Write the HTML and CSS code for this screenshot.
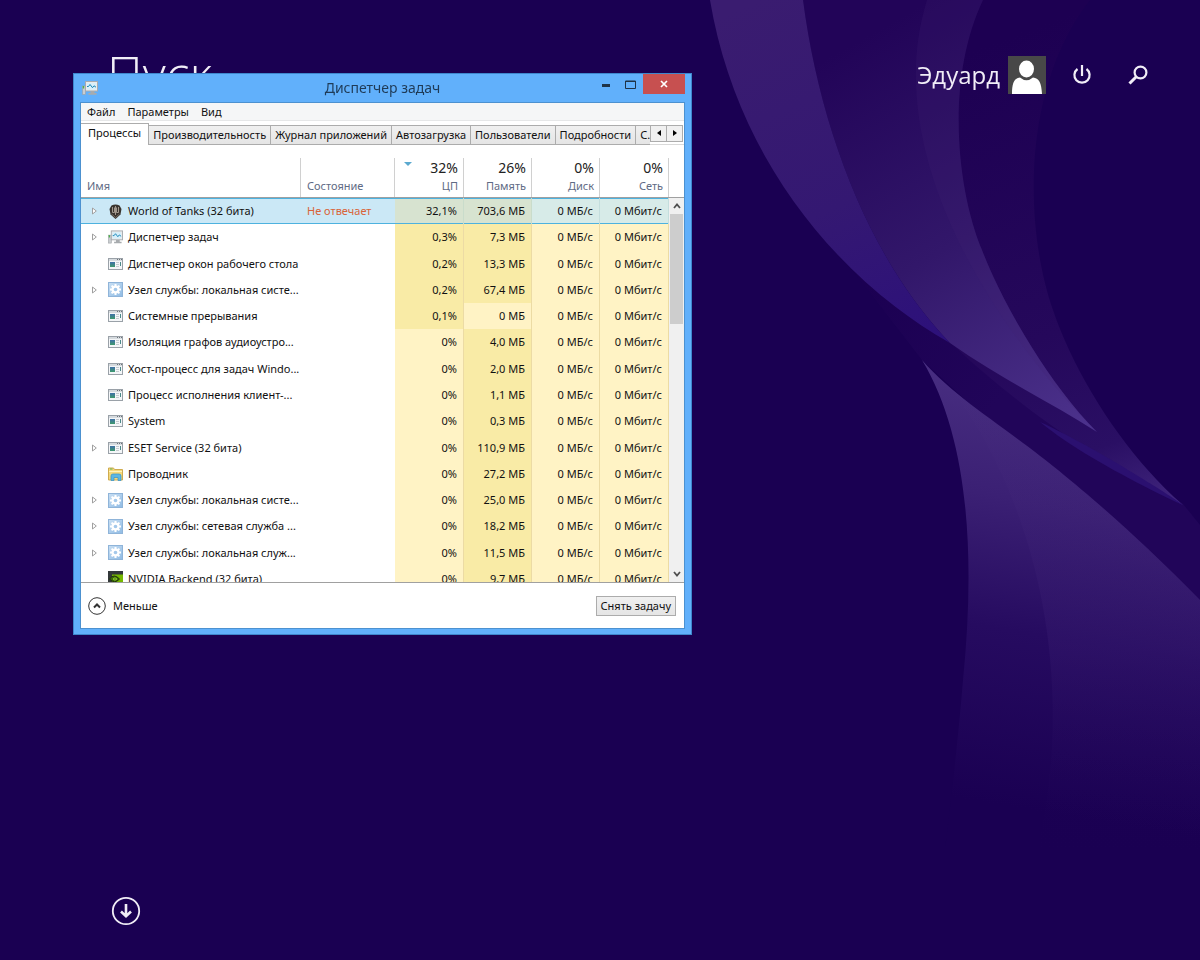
FILE: index.html
```html
<!DOCTYPE html>
<html lang="ru">
<head>
    <meta charset="UTF-8">
    <meta name="viewport" content="width=device-width, initial-scale=1.0">
    <title>Диспетчер задач</title>
    <link rel="stylesheet" href="styles.css">
</head>
<body>
    <!-- icons shared by the rows -->
    <svg class="defs" width="0" height="0">
        <defs>
            <linearGradient id="gearbg" x1="0" y1="0" x2="1" y2="1">
                <stop offset="0" stop-color="#c9dff3"/>
                <stop offset="1" stop-color="#8fbbe4"/>
            </linearGradient>
            <linearGradient id="doc" x1="0" y1="0" x2="0" y2="1">
                <stop offset="0" stop-color="#3f6fa8"/>
                <stop offset="1" stop-color="#3e9a6c"/>
            </linearGradient>
        </defs>
        <symbol id="i-app" viewBox="0 0 15 12">
            <rect x="0.5" y="0.5" width="14" height="11" fill="#f4f6f8" stroke="#9aa1a8"/>
            <rect x="1" y="1" width="13" height="2" fill="#d5dade"/>
            <path d="M9 1.5h1M11 1.5h1M13 1.5h1" stroke="#6d7379"/>
            <rect x="2" y="4" width="5" height="5" fill="url(#doc)"/>
            <path d="M8 4.5h3M8 6.500h3M8 8.500h3" stroke="#c4cbd0"/>
            <rect x="12" y="4" width="1" height="4" fill="#4c8a8a"/>
        </symbol>
        <symbol id="i-gear" viewBox="0 0 15 15">
            <rect x="0.5" y="0.5" width="14" height="14" fill="url(#gearbg)" stroke="#8fb4d9"/>
            <g stroke="#fff" stroke-width="2">
                <path d="M7.5 2v11M2 7.5h11M3.6 3.6l7.8 7.8M11.4 3.6l-7.8 7.8"/>
            </g>
            <circle cx="7.5" cy="7.5" r="4" fill="#fff"/>
            <circle cx="7.5" cy="7.5" r="1.8" fill="#a3c8ea"/>
        </symbol>
        <symbol id="i-task" viewBox="0 0 16 14">
            <rect x="0.5" y="5" width="3" height="8.5" fill="#c9cdd0" stroke="#9a9fa3" stroke-width="0.6"/>
            <rect x="0.8" y="5" width="1.4" height="2.5" fill="#4fb04f"/>
            <path d="M8.500 10h4v2h2v1.700H6.500V12h2z" fill="#a7abae"/>
            <rect x="3.5" y="0.5" width="12" height="9.5" fill="#e9ebec" stroke="#a7abae"/>
            <rect x="5" y="2" width="9" height="6.5" fill="#d6effb"/>
            <path d="M5 5.5h1.5L8 3.5l2.5 3.2L12 4.8l2 1.4" fill="none" stroke="#1d88b8"/>
        </symbol>
        <symbol id="i-tank" viewBox="0 0 12 15">
            <path d="M2 1.5Q6-0.6 10 1.5L12 5l-1 5.5L6 15 1 10.5 0 5z" fill="#39342f"/>
            <path d="M3 3v5.5h2V3.5M7 3.5v5h2V3M6 2v9" fill="none" stroke="#aca397" stroke-width="0.9"/>
            <path d="M2 10l4 3.5L10 10" fill="none" stroke="#746c62"/>
        </symbol>
        <symbol id="i-folder" viewBox="0 0 15 14">
            <path d="M0.5 1h5l1 1.500h8v10.500H0.500z" fill="#f3d87c" stroke="#cfab4e"/>
            <path d="M1 4.500h13" stroke="#fff3bd"/>
            <rect x="2" y="1.500" width="2.500" height="1" fill="#63b35a"/>
            <path d="M3 13.500V9q0-2 2-2h6q2 0 2 2v4.500h-3V10.500H6v3z" fill="#5cb7e4" stroke="#3592c6" stroke-width="0.700"/>
        </symbol>
        <symbol id="i-nvidia" viewBox="0 0 15 15">
            <path d="M0 0h15v15H0z" fill="#33383a"/>
            <path d="M4 3.500h11V15H4z" fill="#76b900"/>
            <path d="M1.500 8q4.500-6 10 0q-5 5.500-10 0z" fill="#3b6b08" stroke="#20330c"/>
            <path d="M5 8q2-2.500 4 0q-2 2.500-4 0" fill="none" stroke="#8fce2a"/>
        </symbol>
        <symbol id="i-exp" viewBox="0 0 5 8">
            <path d="M0.500 1v6L4.300 4z" fill="#fff" stroke="#a0a0a0"/>
        </symbol>
    </svg>

    <svg class="wallpaper" viewBox="0 0 1200 960" preserveAspectRatio="none" aria-hidden="true">
        <defs>
            <linearGradient id="wa" gradientUnits="userSpaceOnUse" x1="760" y1="0" x2="900" y2="340">
                <stop offset="0" stop-color="#3a1c70"/>
                <stop offset="0.6" stop-color="#341872"/>
                <stop offset="1" stop-color="#2d117a"/>
            </linearGradient>
            <linearGradient id="wb" gradientUnits="userSpaceOnUse" x1="860" y1="40" x2="1080" y2="430">
                <stop offset="0" stop-color="#220458"/>
                <stop offset="0.5" stop-color="#32176a"/>
                <stop offset="1" stop-color="#4c328c"/>
            </linearGradient>
            <linearGradient id="wc" gradientUnits="userSpaceOnUse" x1="1000" y1="40" x2="1170" y2="500">
                <stop offset="0" stop-color="#1d0052"/>
                <stop offset="0.6" stop-color="#25085b"/>
                <stop offset="0.85" stop-color="#2a0f64"/>
                <stop offset="1" stop-color="#3f247c"/>
            </linearGradient>
            <linearGradient id="we" gradientUnits="userSpaceOnUse" x1="1040" y1="370" x2="970" y2="800">
                <stop offset="0" stop-color="#492f82"/>
                <stop offset="0.3" stop-color="#3b2074"/>
                <stop offset="0.6" stop-color="#260b60"/>
                <stop offset="1" stop-color="#1a0052"/>
            </linearGradient>
            <linearGradient id="wf" gradientUnits="userSpaceOnUse" x1="1080" y1="430" x2="1050" y2="860">
                <stop offset="0" stop-color="#4a2f80" stop-opacity="0.1"/>
                <stop offset="0.5" stop-color="#3c2074" stop-opacity="0.3"/>
                <stop offset="1" stop-color="#1a0052" stop-opacity="0"/>
            </linearGradient>
            <linearGradient id="wd" gradientUnits="userSpaceOnUse" x1="860" y1="290" x2="1000" y2="400">
                <stop offset="0" stop-color="#1b0052"/>
                <stop offset="1" stop-color="#210559"/>
            </linearGradient>
        </defs>
        <path d="M850 267L950 340L1183 504L1200 525V602L1020 450L922 360z" fill="url(#wd)"/>
        <path d="M803 0H1090C1020 90 1025 230 1053 310C1075 375 1125 455 1183 505L1117 467C1070 442 1000 390 950 342z" fill="url(#wc)"/>
        <path d="M1040 422C1080 440 1150 482 1183 505C1150 490 1080 455 1040 422z" fill="#2b1070"/>
        <path d="M803 0H983C945 80 957 190 982 250C1003 305 1050 385 1097 432C1050 402 1000 378 950 343C870 260 820 130 803 0z" fill="url(#wb)"/>
        <path d="M927 0H983C945 80 957 190 982 250C1003 305 1050 385 1097 432C990 325 880 150 927 0z" fill="#3f2475" fill-opacity="0.2"/>
        <path d="M710 0H803C820 130 870 260 950 343C830 275 735 150 710 0z" fill="url(#wa)"/>
        <path d="M922 360C970 440 975 560 963 680C958 740 951 800 945 850H1200V600C1130 528 1060 470 1023 443C990 418 950 392 922 360z" fill="url(#we)"/>
        <path d="M950 388C1030 490 1080 670 1037 850H1200V600C1130 528 1060 470 1023 443C995 422 970 405 950 388z" fill="url(#wf)"/>
    </svg>

    <div class="start">
        <header class="top">
            <h1>Пуск</h1>
            <div class="user">
                <span class="name">Эдуард</span>
                <svg class="avatar" viewBox="0 0 38 38">
                    <path d="M0 0h38v38H0z" fill="#484848"/>
                    <ellipse cx="18.500" cy="13" rx="7.500" ry="8.500" fill="#fff"/>
                    <path d="M4 38C4 27 6 22 12 21.500Q18.500 27 25 21.500C31 22 33.500 27 34 38z" fill="#fff"/>
                </svg>
                <button class="tool" aria-label="Выключение">
                    <svg width="20" height="22" viewBox="0 0 20 22" fill="none" stroke="#f1edf7" stroke-width="2.200">
                        <path d="M10 1v11M5.500 5A7.600 7.600 0 1 0 14.500 5"/>
                    </svg>
                </button>
                <button class="tool" aria-label="Поиск">
                    <svg width="20" height="20" viewBox="0 0 20 20" fill="none" stroke="#f1edf7">
                        <circle cx="12.500" cy="7.500" r="5.900" stroke-width="2.200"/>
                        <path d="M8.500 11.500L1.500 18.500" stroke-width="3"/>
                    </svg>
                </button>
            </div>
        </header>
        <button class="down" aria-label="Все приложения">
            <svg width="30" height="30" viewBox="0 0 30 30" fill="none" stroke="#f1edf7">
                <circle cx="15" cy="15" r="13.200" stroke-width="1.800"/>
                <path d="M15 8v12M10 15.500l5 4.700 5-4.700" stroke-width="2.600"/>
            </svg>
        </button>
    </div>

    <main class="window">
        <div class="titlebar">
            <svg class="appicon" width="16" height="14"><use href="#i-task"/></svg>
            <h2>Диспетчер задач</h2>
            <div class="winbtns">
                <button aria-label="Свернуть"><svg width="8" height="6"><path d="M0 3h8v3H0z" fill="#1f3347"/></svg></button>
                <button aria-label="Развернуть"><svg width="11" height="9"><path d="M0.500 1h10v7.500h-10zM0 1.500h11" fill="none" stroke="#1f3347"/></svg></button>
                <button class="close" aria-label="Закрыть"><svg width="8" height="8"><path d="M1 1l6 6M7 1L1 7" stroke="#fff" stroke-width="1.700"/></svg></button>
            </div>
        </div>
        <div class="client">
            <nav class="menu">
                <button>Файл</button>
                <button>Параметры</button>
                <button>Вид</button>
            </nav>
            <div class="tabs">
                <button class="tab active">Процессы</button>
                <button class="tab">Производительность</button>
                <button class="tab">Журнал приложений</button>
                <button class="tab">Автозагрузка</button>
                <button class="tab">Пользователи</button>
                <button class="tab">Подробности</button>
                <button class="tab last">С.</button>
                <div class="tabnav">
                    <button aria-label="Назад"><svg width="4" height="6"><path d="M4 0v6L0 3z"/></svg></button>
                    <button aria-label="Вперёд"><svg width="4" height="6"><path d="M0 0v6l4-3z"/></svg></button>
                </div>
            </div>
            <div class="list">
                <table>
                    <colgroup>
                        <col class="c-name"><col class="c-state"><col class="c-cpu"><col class="c-num"><col class="c-num"><col class="c-num">
                    </colgroup>
                    <thead>
                        <tr>
                            <th>Имя</th>
                            <th>Состояние</th>
                            <th class="num sorted"><b>32%</b>ЦП</th>
                            <th class="num"><b>26%</b>Память</th>
                            <th class="num"><b>0%</b>Диск</th>
                            <th class="num"><b>0%</b>Сеть</th>
                        </tr>
                    </thead>
                    <tbody>
                        <tr class="selected">
                            <td><div class="proc"><button class="exp" aria-label="Развернуть"><svg width="5" height="8"><use href="#i-exp"/></svg></button><svg class="ico" width="15" height="15"><use href="#i-tank"/></svg>World of Tanks (32 бита)</div></td>
                            <td class="state">Не отвечает</td><td class="hot">32,1%</td><td class="hot">703,6 МБ</td><td class="warm">0 МБ/с</td><td class="warm">0 Мбит/с</td>
                        </tr>
                        <tr>
                            <td><div class="proc"><button class="exp" aria-label="Развернуть"><svg width="5" height="8"><use href="#i-exp"/></svg></button><svg class="ico" width="15" height="14"><use href="#i-task"/></svg>Диспетчер задач</div></td>
                            <td></td><td class="hot">0,3%</td><td class="hot">7,3 МБ</td><td class="warm">0 МБ/с</td><td class="warm">0 Мбит/с</td>
                        </tr>
                        <tr>
                            <td><div class="proc"><span class="exp"></span><svg class="ico" width="15" height="12"><use href="#i-app"/></svg>Диспетчер окон рабочего стола</div></td>
                            <td></td><td class="hot">0,2%</td><td class="hot">13,3 МБ</td><td class="warm">0 МБ/с</td><td class="warm">0 Мбит/с</td>
                        </tr>
                        <tr>
                            <td><div class="proc"><button class="exp" aria-label="Развернуть"><svg width="5" height="8"><use href="#i-exp"/></svg></button><svg class="ico" width="15" height="15"><use href="#i-gear"/></svg>Узел службы: локальная систе...</div></td>
                            <td></td><td class="hot">0,2%</td><td class="hot">67,4 МБ</td><td class="warm">0 МБ/с</td><td class="warm">0 Мбит/с</td>
                        </tr>
                        <tr>
                            <td><div class="proc"><span class="exp"></span><svg class="ico" width="15" height="12"><use href="#i-app"/></svg>Системные прерывания</div></td>
                            <td></td><td class="hot">0,1%</td><td class="warm">0 МБ</td><td class="warm">0 МБ/с</td><td class="warm">0 Мбит/с</td>
                        </tr>
                        <tr>
                            <td><div class="proc"><span class="exp"></span><svg class="ico" width="15" height="12"><use href="#i-app"/></svg>Изоляция графов аудиоустро...</div></td>
                            <td></td><td class="warm">0%</td><td class="hot">4,0 МБ</td><td class="warm">0 МБ/с</td><td class="warm">0 Мбит/с</td>
                        </tr>
                        <tr>
                            <td><div class="proc"><span class="exp"></span><svg class="ico" width="15" height="12"><use href="#i-app"/></svg>Хост-процесс для задач Windo...</div></td>
                            <td></td><td class="warm">0%</td><td class="hot">2,0 МБ</td><td class="warm">0 МБ/с</td><td class="warm">0 Мбит/с</td>
                        </tr>
                        <tr>
                            <td><div class="proc"><span class="exp"></span><svg class="ico" width="15" height="12"><use href="#i-app"/></svg>Процесс исполнения клиент-...</div></td>
                            <td></td><td class="warm">0%</td><td class="hot">1,1 МБ</td><td class="warm">0 МБ/с</td><td class="warm">0 Мбит/с</td>
                        </tr>
                        <tr>
                            <td><div class="proc"><span class="exp"></span><svg class="ico" width="15" height="12"><use href="#i-app"/></svg>System</div></td>
                            <td></td><td class="warm">0%</td><td class="hot">0,3 МБ</td><td class="warm">0 МБ/с</td><td class="warm">0 Мбит/с</td>
                        </tr>
                        <tr>
                            <td><div class="proc"><button class="exp" aria-label="Развернуть"><svg width="5" height="8"><use href="#i-exp"/></svg></button><svg class="ico" width="15" height="12"><use href="#i-app"/></svg>ESET Service (32 бита)</div></td>
                            <td></td><td class="warm">0%</td><td class="hot">110,9 МБ</td><td class="warm">0 МБ/с</td><td class="warm">0 Мбит/с</td>
                        </tr>
                        <tr>
                            <td><div class="proc"><span class="exp"></span><svg class="ico" width="15" height="14"><use href="#i-folder"/></svg>Проводник</div></td>
                            <td></td><td class="warm">0%</td><td class="hot">27,2 МБ</td><td class="warm">0 МБ/с</td><td class="warm">0 Мбит/с</td>
                        </tr>
                        <tr>
                            <td><div class="proc"><button class="exp" aria-label="Развернуть"><svg width="5" height="8"><use href="#i-exp"/></svg></button><svg class="ico" width="15" height="15"><use href="#i-gear"/></svg>Узел службы: локальная систе...</div></td>
                            <td></td><td class="warm">0%</td><td class="hot">25,0 МБ</td><td class="warm">0 МБ/с</td><td class="warm">0 Мбит/с</td>
                        </tr>
                        <tr>
                            <td><div class="proc"><button class="exp" aria-label="Развернуть"><svg width="5" height="8"><use href="#i-exp"/></svg></button><svg class="ico" width="15" height="15"><use href="#i-gear"/></svg>Узел службы: сетевая служба ...</div></td>
                            <td></td><td class="warm">0%</td><td class="hot">18,2 МБ</td><td class="warm">0 МБ/с</td><td class="warm">0 Мбит/с</td>
                        </tr>
                        <tr>
                            <td><div class="proc"><button class="exp" aria-label="Развернуть"><svg width="5" height="8"><use href="#i-exp"/></svg></button><svg class="ico" width="15" height="15"><use href="#i-gear"/></svg>Узел службы: локальная служ...</div></td>
                            <td></td><td class="warm">0%</td><td class="hot">11,5 МБ</td><td class="warm">0 МБ/с</td><td class="warm">0 Мбит/с</td>
                        </tr>
                        <tr>
                            <td><div class="proc"><span class="exp"></span><svg class="ico" width="15" height="15"><use href="#i-nvidia"/></svg>NVIDIA Backend (32 бита)</div></td>
                            <td></td><td class="warm">0%</td><td class="hot">9,7 МБ</td><td class="warm">0 МБ/с</td><td class="warm">0 Мбит/с</td>
                        </tr>
                    </tbody>
                </table>
                <div class="side">
                    <div class="corner"></div>
                    <div class="scrollbar">
                        <button aria-label="Вверх"><svg width="8" height="6"><path d="M1 5l3-3.500L7 5" fill="none" stroke="#505050" stroke-width="1.800"/></svg></button>
                        <div class="thumb"></div>
                        <button aria-label="Вниз"><svg width="8" height="6"><path d="M1 1l3 3.500L7 1" fill="none" stroke="#505050" stroke-width="1.800"/></svg></button>
                    </div>
                </div>
            </div>
            <footer class="bottom">
                <button class="less">
                    <svg width="18" height="18" viewBox="0 0 18 18" fill="none" stroke="#333"><circle cx="9" cy="9" r="8.300"/><path d="M6 10.500L9 7.500l3 3" stroke-width="2"/></svg>
                    Меньше
                </button>
                <button class="endtask">Снять задачу</button>
            </footer>
        </div>
    </main>
</body>
</html>
```
FILE: styles.css
```css
* {
    box-sizing: border-box;
}

body {
    margin: 0;
    min-height: 100vh;
    background-color: #1a0052;
    font-family: "Noto Sans", "Open Sans", sans-serif;
    font-size: 11px;
    line-height: 16px;
    color: #111;
    overflow: hidden;
}

button {
    padding: 0;
    border: none;
    background: none;
    font: inherit;
    color: inherit;
    white-space: nowrap;
}

svg {
    display: block;
    flex: none;
}

.defs {
    position: absolute;
}

.wallpaper {
    position: fixed;
    width: 100%;
    height: 100%;
    z-index: -1;
}

/* start screen */
.start {
    display: flex;
    flex-direction: column;
    align-items: flex-start;
    justify-content: space-between;
    min-height: 100vh;
    padding: 40px 52px 34px 107px;
    color: #f1edf7;
}

.top {
    display: flex;
    justify-content: space-between;
    width: 100%;
}

.top h1 {
    margin: 0;
    font-family: "Open Sans", sans-serif;
    font-size: 50px;
    font-weight: 300;
    line-height: 68px;
}

.user {
    display: flex;
    align-items: center;
    height: 70px;
}

.name {
    font-family: "Open Sans", sans-serif;
    font-size: 24px;
    line-height: 32px;
}

.avatar {
    width: 38px;
    height: 38px;
    margin: 0 8px;
}

.tool {
    display: flex;
    margin-left: 18px;
}

.tool + .tool {
    margin-left: 36px;
}

.down {
    margin-left: 4px;
}

/* task manager window */
.window {
    position: absolute;
    left: 73px;
    top: 73px;
    display: flex;
    flex-direction: column;
    width: 619px;
    height: 562px;
    padding: 0 6px 5px;
    border: 1px solid #3e87cc;
    background-color: #61b0fb;
}

.titlebar {
    display: grid;
    grid-template-columns: 1fr auto 1fr;
    height: 28px;
}

.appicon {
    margin: 7px 0 0 2px;
}

.titlebar h2 {
    margin: 0;
    font-size: 14px;
    font-weight: 400;
    line-height: 28px;
    color: #1f3b57;
}

.winbtns {
    display: flex;
    justify-content: flex-end;
    height: 20px;
}

.winbtns button {
    display: flex;
    align-items: center;
    justify-content: center;
    width: 25px;
}

.winbtns .close {
    width: 42px;
    background-color: #c75050;
}

.client {
    display: flex;
    flex-direction: column;
    flex: 1;
    min-height: 0;
    border: 1px solid #4c91d0;
    background-color: #fff;
}

.menu {
    display: flex;
    gap: 12px;
    height: 18px;
    padding-left: 6px;
    border-bottom: 1px solid #e6e7e8;
    background-color: #f5f6f7;
}

.tabs {
    display: flex;
    align-items: flex-end;
    height: 24px;
    box-shadow: inset 0 -1px #d9d9d9;
}

.tab {
    height: 20px;
    padding: 0 4px;
    border: 1px solid #acacac;
    border-left: none;
    background: linear-gradient(#f0f0f0, #e5e5e5);
}

.tab.active {
    height: 22px;
    padding: 0 7px 3px;
    border-bottom: none;
    background: #fff;
}

.tab.last {
    flex: 1;
    min-width: 0;
    padding-right: 0;
    border-right: none;
    overflow: hidden;
    text-align: left;
}

.tabnav {
    display: flex;
    align-self: center;
    padding-right: 1px;
}

.tabnav button {
    display: flex;
    align-items: center;
    justify-content: center;
    width: 17px;
    height: 17px;
    border: 1px solid #acacac;
    background-color: #f0f0f0;
}

.tabnav button + button {
    margin-left: -1px;
}

/* process list */
.list {
    display: flex;
    flex: 1;
    min-height: 0;
    overflow: hidden;
}

table {
    flex: 1;
    height: 447px;
    table-layout: fixed;
    border-spacing: 0;
}

.c-state {
    width: 94px;
}

.c-cpu,
.c-num {
    width: 69px;
}

.c-num {
    width: 68px;
}

.c-num:last-child {
    width: 69px;
}

th {
    height: 53px;
    padding: 0 6px 3px;
    border-bottom: 1px solid #a0a0a0;
    background: linear-gradient(#d0d0d0, #d0d0d0) right bottom / 1px 39px no-repeat;
    font-weight: 400;
    text-align: left;
    vertical-align: bottom;
    color: #5f6b85;
}

th b {
    display: block;
    font-size: 14px;
    font-weight: 400;
    line-height: 21px;
    color: #222;
}

.num {
    text-align: right;
}

.sorted {
    position: relative;
}

.sorted::before {
    content: "";
    position: absolute;
    left: 9px;
    top: 17px;
    border: 4px solid transparent;
    border-top-color: #5ba9cf;
    border-bottom: none;
}

td {
    padding: 0;
    white-space: nowrap;
}

.proc {
    display: flex;
    align-items: center;
}

.exp {
    display: flex;
    justify-content: flex-end;
    width: 16px;
    margin-right: 11px;
}

.ico {
    margin-right: 5px;
}

.state {
    padding-left: 6px;
    color: #d9643a;
}

.hot,
.warm {
    padding-right: 6px;
    border-right: 1px solid #ecdba4;
    text-align: right;
}

.hot {
    background-color: #f9eba6;
}

.warm {
    background-color: #fff3c5;
}

.selected td {
    background-color: #cbe8f6;
    box-shadow: inset 0 1px #4db2df, inset 0 -1px #4db2df;
}

.selected .hot {
    border-right-color: #c9dccb;
    background-color: #d7e3d0;
}

.selected .warm {
    border-right-color: #c4dedd;
    background-color: #d7ebe8;
}

.side {
    display: flex;
    flex-direction: column;
    width: 15px;
}

.corner {
    height: 53px;
    border-bottom: 1px solid #a0a0a0;
}

.scrollbar {
    display: flex;
    flex-direction: column;
    flex: 1;
    background-color: #f0f0f0;
}

.scrollbar button {
    display: flex;
    align-items: center;
    justify-content: center;
    height: 16px;
}

.scrollbar button:last-child {
    margin-top: auto;
}

.thumb {
    height: 110px;
    margin: 0 1px;
    background-color: #cdcdcd;
}

.bottom {
    display: flex;
    align-items: center;
    justify-content: space-between;
    height: 46px;
    padding: 0 8px 0 7px;
    border-top: 1px solid #a0a0a0;
}

.less {
    display: flex;
    align-items: center;
    gap: 7px;
}

.endtask {
    height: 20px;
    padding: 0 4px;
    border: 1px solid #acacac;
    background: linear-gradient(#f0f0f0, #e5e5e5);
}
```
